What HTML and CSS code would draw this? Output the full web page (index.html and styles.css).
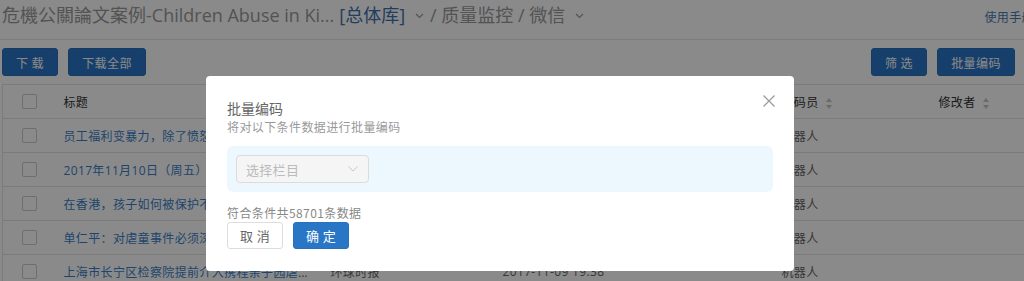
FILE: index.html
```html
<!DOCTYPE html>
<html lang="zh-CN">
<head>
  <meta charset="UTF-8">
  <title>质量监控 - 微信</title>
  <link rel="stylesheet" href="styles.css">
</head>
<body>
  <div class="page">
    <div class="topbar">
      <div class="crumbs">
        <span class="project">危機公關論文案例-Children Abuse in Ki...</span>
        <a class="lib">[总体库]</a>
        <svg class="caret" width="9" height="6" viewBox="0 0 9 6"><polyline points="1,1 4.5,4.5 8,1" fill="none" stroke="#999" stroke-width="1.2"/></svg>
        <span class="path">/ 质量监控 / 微信</span>
        <svg class="caret" width="9" height="6" viewBox="0 0 9 6"><polyline points="1,1 4.5,4.5 8,1" fill="none" stroke="#999" stroke-width="1.2"/></svg>
      </div>
      <a class="manual">使用手册</a>
    </div>

    <div class="toolbar">
      <div class="group">
        <button class="btn btn-primary btn-sm">下 载</button>
        <button class="btn btn-primary btn-md">下载全部</button>
      </div>
      <div class="group">
        <button class="btn btn-primary btn-sm">筛 选</button>
        <button class="btn btn-primary btn-md">批量编码</button>
        <button class="btn btn-primary btn-sm">导 出</button>
      </div>
    </div>

    <table class="grid">
      <colgroup>
        <col style="width:49px">
        <col style="width:267px">
        <col style="width:172px">
        <col style="width:279px">
        <col style="width:157px">
        <col style="width:120px">
      </colgroup>
      <thead>
        <tr>
          <th><span class="check"></span></th>
          <th>标题</th>
          <th>来源</th>
          <th>发布时间</th>
          <th>编码员 <span class="sort"></span></th>
          <th>修改者 <span class="sort"></span></th>
        </tr>
      </thead>
      <tbody>
        <tr>
          <td><span class="check"></span></td>
          <td class="title"><a>员工福利变暴力，除了愤怒，我们还能做什么</a></td>
          <td>环球时报</td>
          <td>2017-11-10 09:12</td>
          <td>机器人</td>
          <td></td>
        </tr>
        <tr>
          <td><span class="check"></span></td>
          <td class="title"><a>2017年11月10日（周五）早间新闻精选</a></td>
          <td>环球时报</td>
          <td>2017-11-10 07:30</td>
          <td>机器人</td>
          <td></td>
        </tr>
        <tr>
          <td><span class="check"></span></td>
          <td class="title"><a>在香港，孩子如何被保护不受伤害</a></td>
          <td>环球时报</td>
          <td>2017-11-09 21:05</td>
          <td>机器人</td>
          <td></td>
        </tr>
        <tr>
          <td><span class="check"></span></td>
          <td class="title"><a>单仁平：对虐童事件必须深挖彻查</a></td>
          <td>环球时报</td>
          <td>2017-11-09 20:14</td>
          <td>机器人</td>
          <td></td>
        </tr>
        <tr>
          <td><span class="check"></span></td>
          <td class="title"><a>上海市长宁区检察院提前介入携程亲子园虐童事件</a></td>
          <td>环球时报</td>
          <td>2017-11-09 19:38</td>
          <td>机器人</td>
          <td></td>
        </tr>
      </tbody>
    </table>
  </div>

  <div class="mask"></div>

  <div class="modal">
    <button class="close" aria-label="关闭">
      <svg width="12" height="12" viewBox="0 0 12 12"><path d="M0.5 0.5 L11.5 11.5 M11.5 0.5 L0.5 11.5" stroke="#999" stroke-width="1.2" fill="none"/></svg>
    </button>
    <div class="modal-title">批量编码</div>
    <div class="modal-sub">将对以下条件数据进行批量编码</div>
    <div class="cond">
      <div class="select">
        <span>选择栏目</span>
        <svg width="10" height="6" viewBox="0 0 10 6"><polyline points="0.5,0.5 5,5 9.5,0.5" fill="none" stroke="#c8c8c8" stroke-width="1"/></svg>
      </div>
    </div>
    <div class="count">符合条件共58701条数据</div>
    <div class="actions">
      <button class="btn btn-default">取 消</button>
      <button class="btn btn-primary">确 定</button>
    </div>
  </div>
</body>
</html>
```

FILE: styles.css
```css
html, body {
  margin: 0;
  height: 100%;
  overflow: hidden;
}
body {
  font-family: "Open Sans", "Noto Sans CJK SC", sans-serif;
  color: #333;
  background: #fff;
}
a {
  color: #3a7fc8;
  text-decoration: none;
}
.page {
  width: 1200px;
}
.topbar {
  display: flex;
  height: 40px;
  border-bottom: 1px solid #e6e6e6;
  width: 1024px;
  box-sizing: border-box;
}
.crumbs {
  display: flex;
  align-items: center;
  height: 28px;
  padding-left: 2px;
  font-size: 18px;
  white-space: nowrap;
}
.project {
  color: #9a9a9a;
}
.lib {
  margin-left: 5px;
  color: #3d73b0;
}
.caret {
  margin: 4px 6px 0 10px;
}
.path {
  color: #9a9a9a;
}
.manual {
  margin-left: auto;
  margin-top: 8px;
  margin-right: -10px;
  font-size: 12px;
  letter-spacing: .4px;
  color: #4a7cb3;
  white-space: nowrap;
}
.toolbar {
  display: flex;
  justify-content: space-between;
  padding: 8px 0 0 2px;
  width: 1081px;
  box-sizing: border-box;
}
.group {
  display: flex;
  gap: 10px;
}
.btn {
  height: 28px;
  padding: 0;
  border: 1px solid transparent;
  border-radius: 3px;
  font-family: "Noto Sans CJK SC", sans-serif;
  font-size: 12px;
  letter-spacing: .4px;
  cursor: pointer;
}
.btn-sm {
  width: 56px;
}
.btn-md {
  width: 78px;
}
.btn-primary {
  background: #2a76c6;
  color: #fff;
  border-color: #2a70bc;
}
.btn-default {
  background: #fff;
  color: #666;
  border-color: #ddd;
}
.grid {
  margin: 8px 0 0 2px;
  border-collapse: collapse;
  table-layout: fixed;
  width: 1044px;
  border-left: 1px solid #e3e3e3;
  border-top: 1px solid #e3e3e3;
  font-size: 12px;
  letter-spacing: .35px;
}
.grid th, .grid td {
  height: 33px;
  padding: 0 0 0 12px;
  border-bottom: 1px solid #e3e3e3;
  text-align: left;
  font-weight: normal;
  white-space: nowrap;
  overflow: hidden;
  text-overflow: ellipsis;
}
.grid th:first-child, .grid td:first-child {
  padding-left: 19px;
}
.grid th {
  color: #333;
}
.grid td {
  color: #666;
}
.grid td.title {
  padding-right: 8px;
}
.check {
  display: block;
  width: 13px;
  height: 13px;
  border: 1px solid #ccc;
  border-radius: 2px;
  background: #fff;
}
.sort {
  display: inline-block;
  vertical-align: middle;
  margin-left: 4px;
  width: 7px;
  height: 11px;
  position: relative;
}
.sort::before, .sort::after {
  content: "";
  position: absolute;
  left: 0;
  border-left: 3.5px solid transparent;
  border-right: 3.5px solid transparent;
}
.sort::before {
  top: 0;
  border-bottom: 4px solid #c5c5c5;
}
.sort::after {
  bottom: 0;
  border-top: 4px solid #c5c5c5;
}
.mask {
  position: fixed;
  inset: 0;
  background: rgba(0, 0, 0, .46);
}
.modal {
  position: fixed;
  top: 76px;
  left: 206px;
  width: 588px;
  box-sizing: border-box;
  padding: 22px 21px 22px 21px;
  background: #fff;
  border-radius: 4px;
  font-family: "Noto Sans CJK SC", sans-serif;
}
.close {
  position: absolute;
  top: 19px;
  right: 19px;
  padding: 0;
  border: 0;
  background: none;
  line-height: 0;
}
.modal-title {
  font-size: 14px;
  line-height: 20px;
  color: #666;
}
.modal-sub {
  font-size: 12px;
  line-height: 18px;
  letter-spacing: .4px;
  color: #999;
}
.cond {
  margin-top: 10px;
  padding: 9px;
  background: #edf7fe;
  border-radius: 6px;
}
.select {
  display: flex;
  align-items: center;
  justify-content: space-between;
  width: 133px;
  height: 28px;
  box-sizing: border-box;
  padding: 0 10px 0 9px;
  border: 1px solid #dcdcdc;
  border-radius: 4px;
  background: #f5f5f5;
  color: #bbb;
  font-size: 13px;
  letter-spacing: .3px;
}
.count {
  margin-top: 13px;
  font-size: 12px;
  line-height: 16px;
  letter-spacing: .4px;
  color: #888;
}
.actions {
  display: flex;
  gap: 10px;
  margin-top: 1px;
}
.actions .btn {
  width: 56px;
  height: 27px;
  font-size: 13px;
}
```
